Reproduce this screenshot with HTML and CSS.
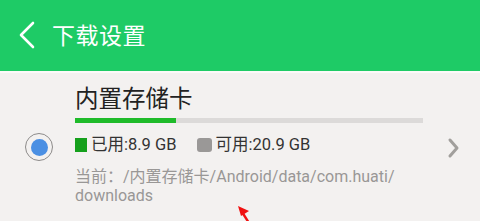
FILE: index.html
```html
<!DOCTYPE html>
<html lang="zh-CN">
<head>
    <meta charset="UTF-8">
    <meta name="viewport" content="width=device-width, initial-scale=1.0">
    <title>下载设置</title>
    <link rel="stylesheet" href="styles.css">
</head>
<body>
    <div class="top-bar">
        <svg class="back-icon" width="18" height="28" viewBox="0 0 18 28">
            <path d="M15 2 L3 14 L15 26" fill="none" stroke="#fff" stroke-width="2.6" stroke-linecap="round" stroke-linejoin="round"/>
        </svg>
        <h1>下载设置</h1>
    </div>
    <div class="storage-item">
        <div class="radio"><span class="radio-dot"></span></div>
        <div class="storage-info">
            <h2>内置存储卡</h2>
            <div class="usage-bar"><div class="usage-fill" style="width: 29%"></div></div>
            <div class="legend">
                <span class="legend-item"><i class="swatch used"></i>已用:8.9 GB</span>
                <span class="legend-item"><i class="swatch free"></i>可用:20.9 GB</span>
            </div>
            <p class="path">当前：/内置存储卡/Android/data/com.huati/<wbr>downloads</p>
        </div>
        <svg class="more-icon" width="14" height="22" viewBox="0 0 14 22">
            <path d="M3 3 L10 11 L3 19" fill="none" stroke="#a19f9c" stroke-width="3" stroke-linecap="round" stroke-linejoin="round"/>
        </svg>
        <!-- annotation arrow -->
        <svg class="mark-arrow" width="20" height="20" viewBox="0 0 20 20">
            <path d="M13 19 L6 8" stroke="#f01010" stroke-width="2.4"/>
            <polygon points="2,2 13,7 5,12" fill="#f01010"/>
        </svg>
    </div>
</body>
</html>
```

FILE: styles.css
```css
body {
    margin: 0;
    background-color: #f3f1f0;
    font-family: Roboto, "Noto Sans CJK SC", sans-serif;
    height: 221px;
    overflow: hidden;
}

/* Header */
.top-bar {
    height: 73px;
    background-color: #1ecb66;
    border-bottom: 2px solid #fbfaf9;
    display: flex;
    align-items: center;
    padding-left: 18px;
    box-sizing: border-box;
}

.back-icon {
    margin-right: 16px;
    margin-top: -2px;
}

.top-bar h1 {
    margin: 0;
    margin-top: -3px;
    font-size: 23px;
    font-weight: 400;
    color: #fff;
    letter-spacing: 0.5px;
}

/* Storage row */
.storage-item {
    position: relative;
    display: flex;
    align-items: flex-start;
    padding-top: 10px;
}

.radio {
    width: 26px;
    height: 26px;
    border: 1.6px solid #8d8b8a;
    border-radius: 50%;
    display: flex;
    justify-content: center;
    align-items: center;
    margin: 50px 0 0 25px;
    flex-shrink: 0;
}

.radio-dot {
    width: 17px;
    height: 17px;
    border-radius: 50%;
    background-color: #4a8fe3;
}

.storage-info {
    margin-left: 22px;
    width: 350px;
}

.storage-info h2 {
    margin: 0;
    font-size: 23.5px;
    font-weight: 400;
    color: #222;
    line-height: 32px;
}

.usage-bar {
    margin-top: 3px;
    height: 5px;
    background-color: #dcdad9;
    width: 348px;
}

.usage-fill {
    height: 100%;
    background-color: #1fbb2a;
}

.legend {
    display: flex;
    margin-top: 13px;
    font-size: 16.5px;
    color: #333;
    line-height: 18px;
}

.legend-item {
    display: flex;
    align-items: center;
    margin-right: 20px;
}

.swatch {
    display: inline-block;
    width: 12px;
    height: 14px;
    margin-right: 4px;
}

.swatch.used {
    background-color: #15a01c;
}

.swatch.free {
    width: 15px;
    background-color: #9a9897;
    border-radius: 3px;
}

.path {
    margin: 13px 0 0;
    font-size: 16px;
    line-height: 19px;
    color: #999796;
}

.more-icon {
    margin: 54px 0 0 22px;
}

.mark-arrow {
    position: absolute;
    left: 236px;
    top: 131px;
}
```
